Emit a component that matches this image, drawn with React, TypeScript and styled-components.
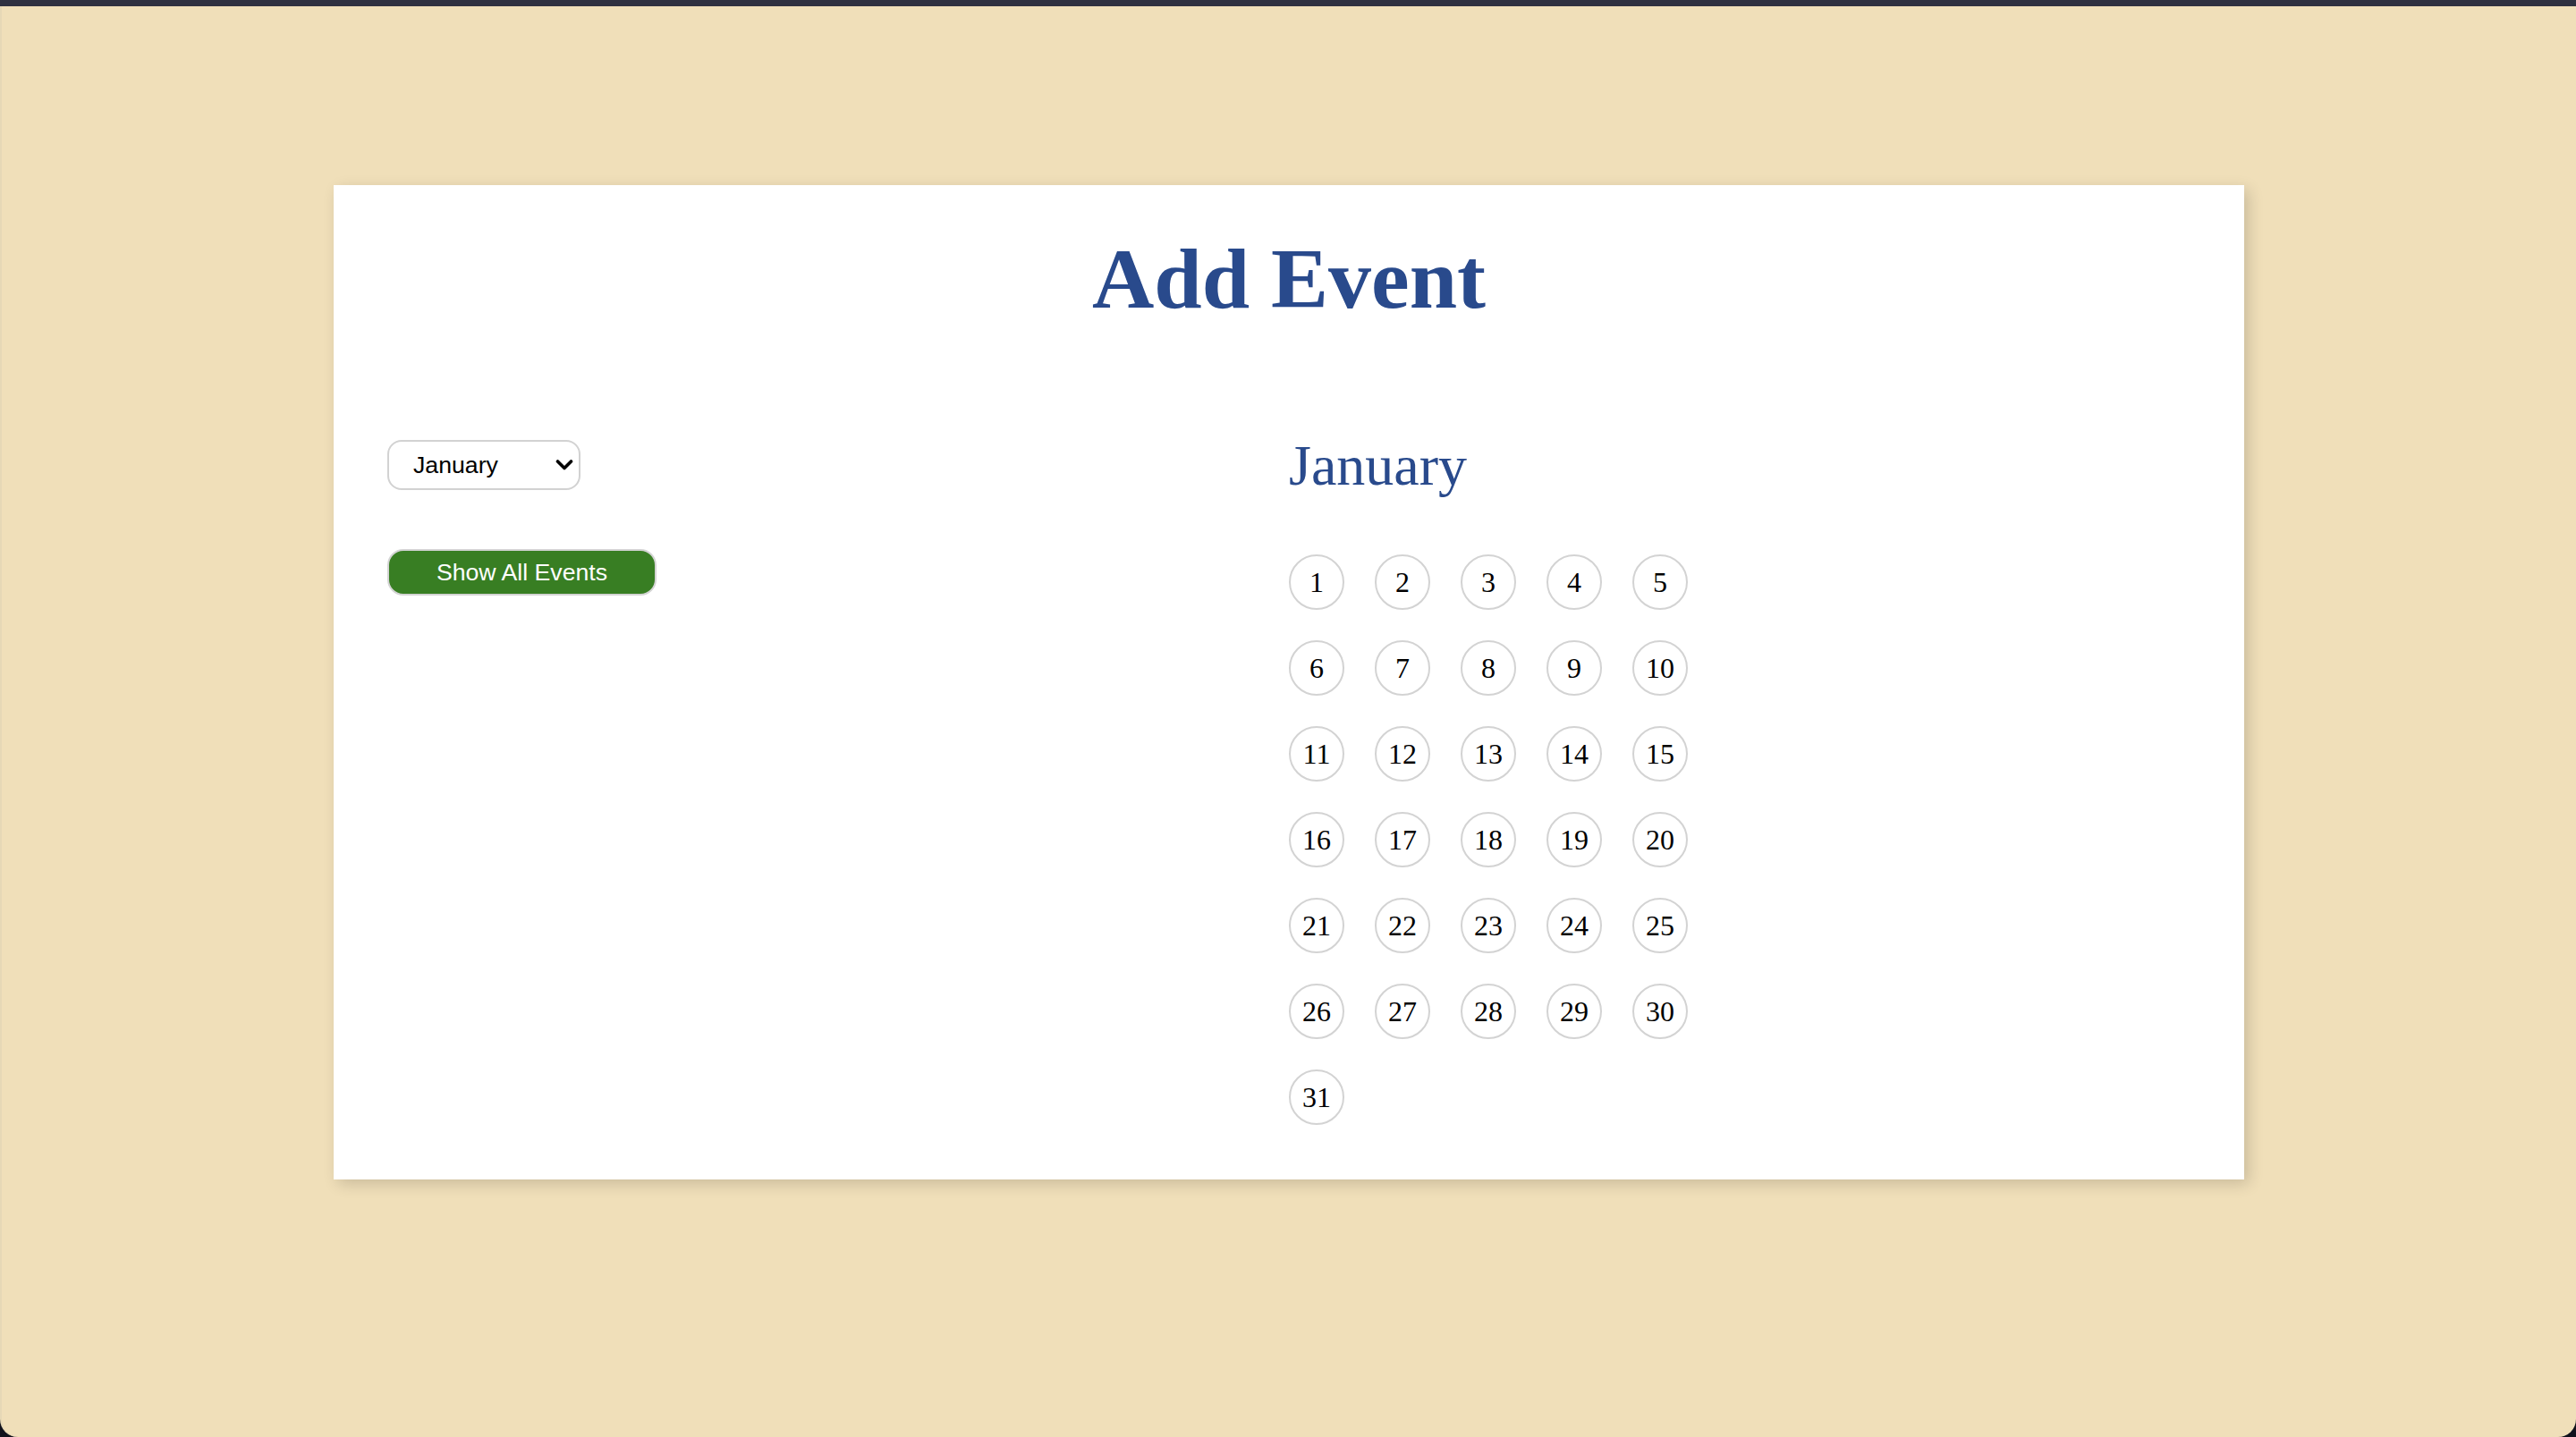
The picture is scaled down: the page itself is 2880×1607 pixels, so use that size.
import React from "react";
import styled, { createGlobalStyle } from "styled-components";

const GlobalStyle = createGlobalStyle`
  html, body {
    margin: 0;
    padding: 0;
    height: 100%;
    background: #11121c;
  }
  #root {
    height: 100%;
  }
  * {
    box-sizing: border-box;
  }
`;

const Frame = styled.div`
  display: flex;
  flex-direction: column;
  height: 100vh;
  background: #11121c;
`;

const TopBar = styled.div`
  height: 7px;
  flex: 0 0 7px;
  background: #2f3140;
`;

const Stage = styled.main`
  flex: 1;
  background: #f0dfb9;
  border-radius: 0 0 20px 20px;
  border-left: 2px solid #e6d8b6;
  padding-top: 200px;
  display: flex;
  justify-content: center;
  align-items: flex-start;
`;

const Card = styled.section`
  width: 2136px;
  background: #ffffff;
  padding: 50px 60px 61px 60px;
  box-shadow: 5px 5px 16px rgba(0, 0, 0, 0.16);
`;

const Title = styled.h1`
  margin: 0;
  text-align: center;
  font-family: "Liberation Serif", "Times New Roman", serif;
  font-weight: 700;
  font-size: 96px;
  line-height: 110px;
  color: #294a8c;
`;

const Body = styled.div`
  display: grid;
  grid-template-columns: 1fr 1fr;
  margin-top: 117px;
`;

const Controls = styled.div`
  display: flex;
  flex-direction: column;
  align-items: flex-start;
  gap: 66px;
  padding-top: 8px;
`;

const SelectWrap = styled.div`
  position: relative;
  width: 216px;
  height: 56px;
`;

const MonthSelect = styled.select`
  appearance: none;
  -webkit-appearance: none;
  width: 100%;
  height: 100%;
  margin: 0;
  border: 2px solid #d2d2d2;
  border-radius: 16px;
  background: #ffffff;
  padding: 0 40px 0 27px;
  font-family: "Liberation Sans", Arial, sans-serif;
  font-size: 26.67px;
  color: #000000;
  outline: none;
`;

const Chevron = styled.svg`
  position: absolute;
  right: 8px;
  top: 50%;
  width: 20px;
  height: 14px;
  transform: translateY(-50%);
  pointer-events: none;
`;

const ShowButton = styled.button`
  width: 301px;
  height: 52px;
  margin: 0;
  padding: 0;
  border: 2px solid #d4d4d4;
  border-radius: 18px;
  background: #387e23;
  color: #ffffff;
  font-family: "Liberation Sans", Arial, sans-serif;
  font-size: 26.67px;
  cursor: pointer;
`;

const Calendar = styled.div`
  display: flex;
  flex-direction: column;
  align-items: flex-start;
`;

const MonthTitle = styled.h2`
  margin: 0;
  font-family: "Liberation Serif", "Times New Roman", serif;
  font-weight: 400;
  font-size: 64px;
  line-height: 74px;
  color: #294a8c;
`;

const DaysGrid = styled.div`
  display: grid;
  grid-template-columns: repeat(5, 62px);
  grid-auto-rows: 62px;
  gap: 34px;
  margin-top: 62px;
`;

const Day = styled.div`
  width: 62px;
  height: 62px;
  border: 2px solid #d3d3d3;
  border-radius: 50%;
  display: flex;
  align-items: center;
  justify-content: center;
  font-family: "Liberation Serif", "Times New Roman", serif;
  font-size: 32px;
  line-height: 1;
  color: #000000;
  background: #ffffff;
`;

const months = [
  "January",
  "February",
  "March",
  "April",
  "May",
  "June",
  "July",
  "August",
  "September",
  "October",
  "November",
  "December",
];

export default function App() {
  const days = Array.from({ length: 31 }, (_, i) => i + 1);
  return (
    <>
      <GlobalStyle />
      <Frame>
        <TopBar />
        <Stage>
          <Card>
            <Title>Add Event</Title>
            <Body>
              <Controls>
                <SelectWrap>
                  <MonthSelect defaultValue="January">
                    {months.map((m) => (
                      <option key={m} value={m}>
                        {m}
                      </option>
                    ))}
                  </MonthSelect>
                  <Chevron viewBox="0 0 20 14" aria-hidden="true">
                    <path
                      d="M2.5 3 L10 10.5 L17.5 3"
                      fill="none"
                      stroke="#000"
                      strokeWidth="3.6"
                      strokeLinecap="round"
                      strokeLinejoin="round"
                    />
                  </Chevron>
                </SelectWrap>
                <ShowButton type="button">Show All Events</ShowButton>
              </Controls>
              <Calendar>
                <MonthTitle>January</MonthTitle>
                <DaysGrid>
                  {days.map((d) => (
                    <Day key={d}>{d}</Day>
                  ))}
                </DaysGrid>
              </Calendar>
            </Body>
          </Card>
        </Stage>
      </Frame>
    </>
  );
}
